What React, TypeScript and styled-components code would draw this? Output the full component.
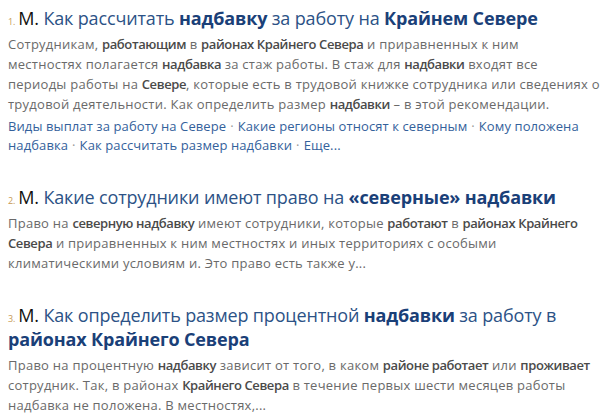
import React from "react";
import styled, { createGlobalStyle } from "styled-components";

const Global = createGlobalStyle`
  html, body { margin: 0; padding: 0; background: #fff; overflow: hidden; }
  body { font-family: "Open Sans", "Noto Sans", sans-serif; }
`;

const List = styled.div`
  display: flex;
  flex-direction: column;
  gap: 30px;
  padding: 6px 0 0 8px;
  width: 600px;
  box-sizing: border-box;
`;

const Item = styled.div`
  display: flex;
  flex-direction: column;
`;

const Title = styled.div`
  font-size: 18px;
  line-height: 24px;
  color: #2c5286;
  letter-spacing: -0.15px;
`;

const Num = styled.span`
  font-size: 9px;
  line-height: 1;
  color: #c79a55;
  margin-right: 3px;
`;

const Prefix = styled.span`
  color: #111;
`;

const TitleLink = styled.a`
  color: #2c5286;
  text-decoration: none;
  & b { color: #1a4078; font-weight: 700; }
`;

const Snippet = styled.div`
  margin-top: 4px;
  font-size: 13px;
  line-height: 20px;
  color: #6a6a6a;
  letter-spacing: 0.25px;
  white-space: nowrap;
  & b { color: #4a4a4a; font-weight: 600; letter-spacing: -0.4px; }
`;

const Links = styled.div`
  margin-top: 3px;
  font-size: 13px;
  line-height: 19px;
  color: #999;
  letter-spacing: 0.1px;
`;

const SubLink = styled.a`
  color: #34619b;
  text-decoration: none;
`;

const Sep = styled.span`
  color: #999;
  margin: 0 4px;
`;

const subLinks = [
  "Виды выплат за работу на Севере",
  "Какие регионы относят к северным",
  "Кому положена надбавка",
  "Как рассчитать размер надбавки",
  "Еще...",
];

export default function App() {
  return (
    <>
      <Global />
      <List>
        <Item>
          <Title>
            <Num>1.</Num>
            <Prefix>М. </Prefix>
            <TitleLink href="#">
              Как рассчитать <b>надбавку</b> за работу на <b>Крайнем Севере</b>
            </TitleLink>
          </Title>
          <Snippet>
            Сотрудникам, <b>работающим</b> в <b>районах Крайнего Севера</b> и приравненных к ним
            <br />
            местностях полагается <b>надбавка</b> за стаж работы. В стаж для <b>надбавки</b> входят все
            <br />
            периоды работы на <b>Севере</b>, которые есть в трудовой книжке сотрудника или сведениях о
            <br />
            трудовой деятельности. Как определить размер <b>надбавки</b> – в этой рекомендации.
          </Snippet>
          <Links>
            {subLinks.map((l, i) => (
              <React.Fragment key={l}>
                {i > 0 && <Sep>·</Sep>}
                <SubLink href="#">{l}</SubLink>
              </React.Fragment>
            ))}
          </Links>
        </Item>
        <Item>
          <Title>
            <Num>2.</Num>
            <Prefix>М. </Prefix>
            <TitleLink href="#">
              Какие сотрудники имеют право на <b>«северные»</b> <b>надбавки</b>
            </TitleLink>
          </Title>
          <Snippet>
            Право на <b>северную надбавку</b> имеют сотрудники, которые <b>работают</b> в <b>районах Крайнего</b>
            <br />
            <b>Севера</b> и приравненных к ним местностях и иных территориях с особыми
            <br />
            климатическими условиям и. Это право есть также у...
          </Snippet>
        </Item>
        <Item>
          <Title>
            <Num>3.</Num>
            <Prefix>М. </Prefix>
            <TitleLink href="#">
              Как определить размер процентной <b>надбавки</b> за работу в <b>районах Крайнего Севера</b>
            </TitleLink>
          </Title>
          <Snippet>
            Право на процентную <b>надбавку</b> зависит от того, в каком <b>районе работает</b> или <b>проживает</b>
            <br />
            сотрудник. Так, в районах <b>Крайнего Севера</b> в течение первых шести месяцев работы
            <br />
            надбавка не положена. В местностях,...
          </Snippet>
        </Item>
      </List>
    </>
  );
}
